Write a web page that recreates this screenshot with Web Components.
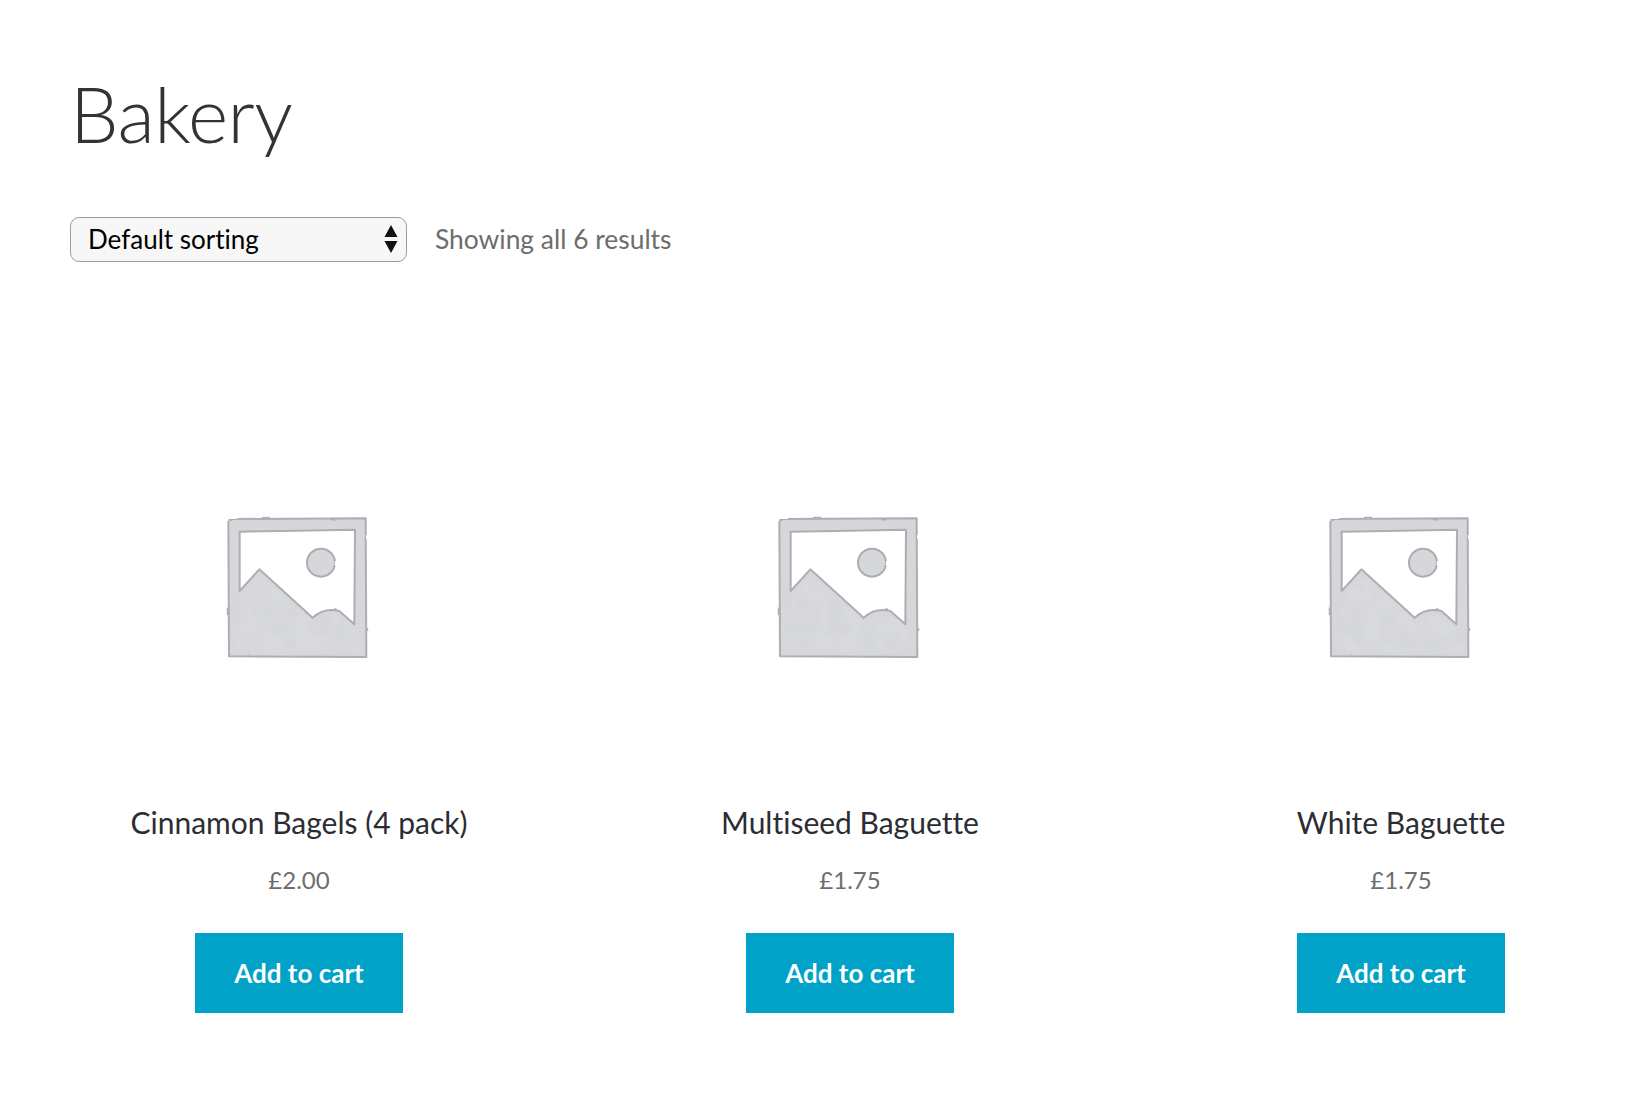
<!DOCTYPE html>
<html lang="en">
<head>
<meta charset="utf-8">
<title>Bakery</title>
<style>
  html, body { margin: 0; background: #fff; }
  body { font-family: Lato, "Liberation Sans", sans-serif; font-variant-ligatures: none; }
</style>
</head>
<body>
<shop-page heading="Bakery">
  <sort-select slot="toolbar">Default sorting</sort-select>
  <span slot="toolbar">Showing all 6 results</span>
  <product-card name="Cinnamon Bagels (4 pack)" price="£2.00"></product-card>
  <product-card name="Multiseed Baguette" price="£1.75"></product-card>
  <product-card name="White Baguette" price="£1.75"></product-card>
</shop-page>

<script>
class ShopPage extends HTMLElement {
  constructor() {
    super();
    this.root = this.attachShadow({ mode: 'open' });
    this.root.innerHTML = `
      <style>
        :host {
          display: block;
          box-sizing: border-box;
          width: 1640px;
          height: 1096px;
          padding: 67px 10px 0 70px;
          overflow: hidden;
        }
        h1 {
          margin: 0;
          font: 300 77px/92px Lato, sans-serif;
          color: #333;
          letter-spacing: -0.5px;
        }
        .toolbar {
          display: flex;
          align-items: center;
          gap: 28px;
          height: 44px;
          margin-top: 58px;
          font-size: 26.4px;
          color: #6d6d6d;
        }
        .products {
          display: grid;
          grid-template-columns: repeat(3, 458px);
          column-gap: 93px;
          margin-top: 255px;
        }
      </style>
      <h1></h1>
      <div class="toolbar"><slot name="toolbar"></slot></div>
      <div class="products"><slot></slot></div>
    `;
    this.root.querySelector('h1').textContent = this.getAttribute('heading');
  }
}

class SortSelect extends HTMLElement {
  constructor() {
    super();
    this.root = this.attachShadow({ mode: 'open' });
    this.root.innerHTML = `
      <style>
        :host {
          display: flex;
          align-items: center;
          justify-content: space-between;
          box-sizing: border-box;
          width: 337px;
          height: 45px;
          padding: 0 8px 0 17px;
          border: 1.5px solid #9c9c9c;
          border-radius: 9px;
          background: #f7f7f7;
          color: #000;
          font-size: 26px;
        }
        svg { display: block; }
      </style>
      <slot></slot>
      <svg width="14" height="30" viewBox="0 0 14 30">
        <path d="M7 1 L13.5 13 L.5 13 Z M.5 17 L13.5 17 L7 29 Z" fill="#111"/>
      </svg>
    `;
  }
}

let placeholderCount = 0;

class PlaceholderImage extends HTMLElement {
  constructor() {
    super();
    this.root = this.attachShadow({ mode: 'open' });
    const seed = ++placeholderCount;
    this.root.innerHTML = `
      <style>
        :host { display: block; width: 170px; height: 170px; }
        svg { display: block; }
      </style>
      <svg width="170" height="170" viewBox="0 0 510 510">
        <defs>
          <filter id="sketch" x="-5%" y="-5%" width="110%" height="110%">
            <feTurbulence type="fractalNoise" baseFrequency=".012" numOctaves="1" seed="4" result="wobble"/>
            <feDisplacementMap in="SourceGraphic" in2="wobble" scale="7"/>
            <feGaussianBlur stdDeviation="2"/>
          </filter>
          <filter id="mottle" x="0" y="0" width="100%" height="100%">
            <feTurbulence type="fractalNoise" baseFrequency=".02" numOctaves="3" seed="${seed + 6}"/>
            <feColorMatrix values="0 0 0 0 .70  0 0 0 0 .71  0 0 0 0 .74  4.5 0 0 0 -1.9"/>
            <feComposite in2="SourceAlpha" operator="in"/>
            <feGaussianBlur stdDeviation="3"/>
          </filter>
        </defs>
        <g filter="url(#sketch)">
          <path fill-rule="evenodd" fill="#d6d7db" stroke="#adaeb2" stroke-width="6" stroke-linejoin="round"
            d="M52 54 L464 52 L466 468 L54 466 Z
               M86 92 L86 270 L145 205 L305 350 Q340 318 385 330 L430 370 L432 86 Z"/>
          <circle cx="330" cy="185" r="42" fill="#d6d7db" stroke="#adaeb2" stroke-width="6"/>
        </g>
        <path filter="url(#mottle)" d="M92 290 L145 222 L305 366 Q340 334 385 346 L440 388 L450 452 L70 452 Z" fill="#000" opacity=".7"/>
      </svg>
    `;
  }
}

class AddToCart extends HTMLElement {
  constructor() {
    super();
    this.root = this.attachShadow({ mode: 'open' });
    this.root.innerHTML = `
      <style>
        :host {
          display: flex;
          align-items: center;
          justify-content: center;
          width: 208px;
          height: 80px;
          background: #00a2c8;
          color: #fff;
          font-weight: 700;
          font-size: 26px;
        }
      </style>
      <slot></slot>
    `;
  }
}

class ProductCard extends HTMLElement {
  constructor() {
    super();
    this.root = this.attachShadow({ mode: 'open' });
    this.root.innerHTML = `
      <style>
        :host {
          display: flex;
          flex-direction: column;
          align-items: center;
        }
        placeholder-image { margin: -15px 6px 0 0; }
        .name {
          margin-top: 131px;
          font-size: 30px;
          line-height: 40px;
          color: #2c2d33;
        }
        .price {
          margin-top: 21px;
          font-size: 24px;
          line-height: 34px;
          color: #6d6d6d;
        }
        add-to-cart { margin-top: 36px; }
      </style>
      <placeholder-image></placeholder-image>
      <div class="name"></div>
      <div class="price"></div>
      <add-to-cart>Add to cart</add-to-cart>
    `;
    this.root.querySelector('.name').textContent = this.getAttribute('name');
    this.root.querySelector('.price').textContent = this.getAttribute('price');
  }
}

customElements.define('placeholder-image', PlaceholderImage);
customElements.define('add-to-cart', AddToCart);
customElements.define('sort-select', SortSelect);
customElements.define('product-card', ProductCard);
customElements.define('shop-page', ShopPage);
</script>
</body>
</html>
